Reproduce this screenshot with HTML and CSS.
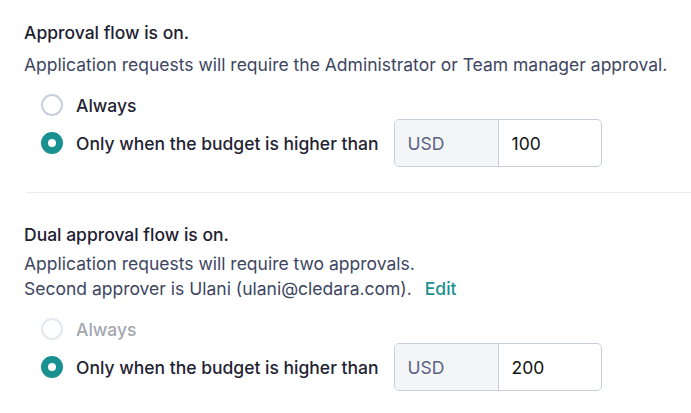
FILE: index.html
```html
<!DOCTYPE html>
<html>
<head>
<meta charset="utf-8">
<link rel="stylesheet" href="styles.css">
</head>
<body>
<main class="page">
  <section class="block block-first">
    <h2 class="title">Approval flow is on.</h2>
    <p class="desc desc-first">Application requests will require the Administrator or Team manager approval.</p>
    <div class="options">
      <label class="option">
        <span class="radio"></span>
        <span class="opt-label">Always</span>
      </label>
      <div class="option option-input">
        <span class="radio radio-on"></span>
        <span class="opt-label">Only when the budget is higher than</span>
        <div class="money">
          <span class="currency">USD</span>
          <span class="amount">100</span>
        </div>
      </div>
    </div>
  </section>
  <hr class="divider">
  <section class="block">
    <h2 class="title">Dual approval flow is on.</h2>
    <p class="desc desc-second">Application requests will require two approvals.<br>Second approver is Ulani (ulani@cledara.com).<a class="edit">Edit</a></p>
    <div class="options options-second">
      <label class="option option-disabled">
        <span class="radio radio-disabled"></span>
        <span class="opt-label">Always</span>
      </label>
      <div class="option option-input">
        <span class="radio radio-on"></span>
        <span class="opt-label">Only when the budget is higher than</span>
        <div class="money">
          <span class="currency">USD</span>
          <span class="amount">200</span>
        </div>
      </div>
    </div>
  </section>
</main>
</body>
</html>
```

FILE: styles.css
```css
* { box-sizing: border-box; }
html, body { margin: 0; padding: 0; background: #fff; }
body {
  font-family: Inter, "Noto Sans", sans-serif;
  color: #1f2433;
  -webkit-font-smoothing: antialiased;
}
.page { padding: 22px 0 0 24px; }
.title {
  margin: 0;
  font-size: 17.5px;
  line-height: 22px;
  font-weight: 500;
  color: #1d2130;
}
.desc {
  margin: 0;
  font-size: 17.5px;
  color: #3d4561;
}
.desc-first { margin-top: 9px; line-height: 24px; }
.desc-second { margin-top: 5px; line-height: 25px; }
.edit {
  color: #1a9191;
  font-weight: 500;
  margin-left: 13px;
  cursor: pointer;
}
.options {
  margin-top: 16px;
  padding-left: 17px;
  display: flex;
  flex-direction: column;
  gap: 2px;
}
.options-second { margin-top: 16px; }
.option {
  display: flex;
  align-items: center;
  gap: 13px;
  height: 24px;
  font-size: 17.5px;
  font-weight: 500;
  color: #1f2433;
}
.option-input { height: 48px; }
.option-disabled { color: #a3a7b0; }
.radio {
  width: 22px;
  height: 22px;
  border-radius: 50%;
  border: 2px solid #c8cedd;
  flex: none;
}
.radio-disabled { border-color: #e4e7ee; }
.radio-on {
  border: 7px solid #1a9191;
  background: #fff;
}
.money {
  margin-left: 2px;
  display: flex;
  width: 208px;
  height: 48px;
  border: 1px solid #c9cedb;
  border-radius: 5px;
  overflow: hidden;
  font-weight: 400;
}
.currency {
  width: 104px;
  background: #f4f5f7;
  border-right: 1px solid #c9cedb;
  color: #5a6385;
  display: flex;
  align-items: center;
  padding-left: 13px;
}
.amount {
  flex: 1;
  display: flex;
  align-items: center;
  padding-left: 13px;
  color: #111;
}
.divider {
  margin: 25px 0 0 2px;
  border: 0;
  border-top: 1px solid #ececee;
  height: 0;
}
.block + .divider + .block { padding-top: 31px; }
```
